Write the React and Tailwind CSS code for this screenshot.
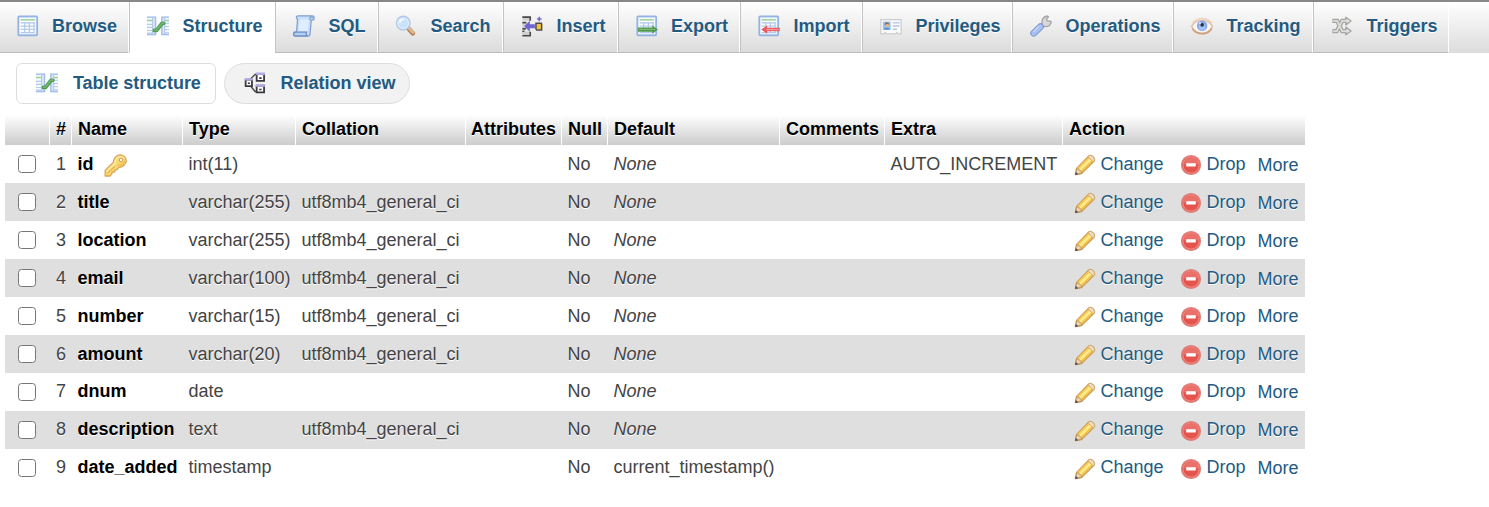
import React from "react";

function Icon({ children, className = "" }) {
  return (
    <svg viewBox="0 0 16 16" className={`h-[22px] w-[22px] shrink-0 ${className}`} fill="none" aria-hidden="true">
      {children}
    </svg>
  );
}

function Sheet() {
  return (
    <>
      <rect x="0.9" y="1" width="13.8" height="13.8" rx="0.6" fill="#d9e6f8" stroke="#94b3e0" strokeWidth="1.200" />
      <rect x="2" y="2.1" width="11.6" height="11.6" fill="#fbfdff" />
      <path d="M2.600 3.500h10.400" stroke="#a9d3a4" strokeWidth="1.300" />
      <path d="M2.600 5.700h10.400" stroke="#b4caea" strokeWidth="1" />
      <path d="M5.600 5.500v7.700M9 5.500v7.700M12.400 5.500v7.700M2.600 8.100h10.400M2.600 10.500h10.400M2.600 12.900h10.400" stroke="#b4caea" strokeWidth="0.9" />
    </>
  );
}

const BrowseIcon = () => <Icon><Sheet /></Icon>;

const StructureIcon = () => (
  <Icon>
    <path d="M0 1h6.700v13.700H0zM10.300 1H16v13.700h-5.700z" fill="#dce8f9" />
    <path d="M0 1.500h6.200v12.700H0M16 1.500h-5.200v12.700H16" stroke="#a3bfe7" strokeWidth="1" />
    <path d="M.2 2.300h3.500v11.200H.2zM13.200 2.300H16v11.200h-2.800z" fill="#f6faff" />
    <path d="M4.100 2v12M12.800 2v12" stroke="#b4caea" strokeWidth="0.8" />
    <path d="M0 6.800h4M0 9h4M0 11.300h4M0 13.200h4M13 6h3M13 8.400h3M13 10.700h3M13 13h3" stroke="#b4caea" strokeWidth="0.8" />
    <path d="M0 4h4M13 4h3" stroke="#a0cca4" strokeWidth="1.200" />
    <path d="M5.300 11.200h1.700l4-5.200h1.200" stroke="#4d9a4f" strokeWidth="2.700" strokeLinecap="round" strokeLinejoin="round" />
    <path d="M5.400 11h1.600l4-5.200h1.200" stroke="#6cb36d" strokeWidth="1.400" strokeLinecap="round" strokeLinejoin="round" />
  </Icon>
);

const SqlIcon = () => (
  <Icon>
    <path d="M3.500.7h10.700c1.500 0 1.600 3-.1 3h-.8l-.9 9.800c0 1-.6 1.800-1.500 1.800H1.500c-1.600 0-1.600-3 0-3h1.100L3.300 3C2 2.400 2.200.7 3.500.7z" fill="#c8dff9" stroke="#7f9fcf" strokeWidth="0.9" />
    <path d="M4.800 3.300h6.700l-.8 8.300H4z" fill="#deedff" />
    <path d="M12.300 3.700l.2-1.700c.3-.9 1.500-.8 2 .2" stroke="#7f9fcf" />
    <path d="M2 12.500h7.800c-.5 1 0 2.500.8 2.700H1.500c-1.300-.2-1.300-2.600.5-2.700z" fill="#b3d0f2" stroke="#6f90c2" strokeWidth="0.9" />
  </Icon>
);

const SearchIcon = () => (
  <Icon>
    <path d="M9.900 10l3.100 3.300" stroke="#b38660" strokeWidth="3.400" strokeLinecap="round" />
    <path d="M10.200 9.800l3 3" stroke="#e6bb8c" strokeWidth="1.800" strokeLinecap="round" />
    <circle cx="6" cy="5.900" r="4.900" fill="#c9e1fb" stroke="#b4c9e3" strokeWidth="1.100" />
    <circle cx="6" cy="5.900" r="3.900" stroke="#deefff" strokeWidth="0.900" />
    <path d="M3.500 5.700c.2-1.800 1.500-2.600 3-2.500" stroke="#f5fbff" strokeWidth="1.300" />
  </Icon>
);

const InsertIcon = () => (
  <Icon>
    <path d="M1 1h5.500v3H1M1 6h3v4H1M1 12h5.500v3H1" fill="#cfcfcf" />
    <path d="M1 1.500h5.700v2.700M1 5.500h3M1 10.100h2.500M1 11.800h1.500M1 15.100h5.700v-3" stroke="#4b4b4b" strokeWidth="1.200" />
    <path d="M2.300 8.200l4.100-4v2.500h3.700v3H6.400v2.500z" fill="#6d66cf" />
    <rect x="11.200" y="6.300" width="3.600" height="4.300" fill="#f4c833" />
    <path d="M10.900 10.800V6h4.200M15 6v4.900h-4" stroke="#514943" strokeWidth="1.100" />
    <path d="M13.300 1.200v3.400M11.600 2.900H15" stroke="#736cd1" strokeWidth="1.200" />
  </Icon>
);

const ExportIcon = () => (
  <Icon>
    <Sheet />
    <path d="M1.400 9h10.500V7.600l4 3-4 3v-1.500H1.400z" fill="#4d984b" />
    <path d="M2 10.500h12" stroke="#7fb978" strokeWidth="0.9" />
  </Icon>
);

const ImportIcon = () => (
  <Icon>
    <Sheet />
    <path d="M2.400 10.600l4.200-3v1.700h9.200v2.600H6.600v1.700z" fill="#e8575d" />
    <path d="M6 10.600h9" stroke="#f49da0" strokeWidth="0.9" />
  </Icon>
);

const PrivilegesIcon = () => (
  <Icon>
    <path d="M.6 3.300h14.800v10.400h-2.200l-.9-1-1 1H4.800l-1-1-.9 1H.6z" fill="#fafafa" stroke="#cdcdcd" strokeWidth="0.9" />
    <rect x="2.100" y="4.800" width="5.600" height="6" fill="#8fc0f0" />
    <path d="M2.800 10.800c0-2.300 4.200-2.300 4.200 0z" fill="#5a92d3" />
    <circle cx="5" cy="7.400" r="1.500" fill="#e6b68e" />
    <path d="M3.400 7.200c0-2.500 3.200-2.500 3.200-.1l-1-.8z" fill="#8b6544" />
    <path d="M9.300 5.700h4.900M9.300 8h4.900M9.300 10.400h3" stroke="#b2c7df" strokeWidth="1" />
  </Icon>
);

const OperationsIcon = () => (
  <Icon>
    <path d="M7.500 8.100l1.400-1.700C8 4 9.500 1.200 12.500.7l.9.600-1.500 1.800.8 1.400 2.200-.1.600.8c-.8 2.700-3 3.500-4.900 3L9 9.500z" fill="#d8d8d8" stroke="#a0a0a0" strokeWidth="0.9" strokeLinejoin="round" />
    <path d="M2.700 13.200l4.900-4.700" stroke="#8199d0" strokeWidth="5" strokeLinecap="round" />
    <path d="M2.700 13.200l4.900-4.700" stroke="#a8c1f2" strokeWidth="3.500" strokeLinecap="round" />
    <path d="M2.400 12.300l4.200-4.100" stroke="#c9dafa" strokeWidth="0.900" />
  </Icon>
);

const TrackingIcon = () => (
  <Icon>
    <path d="M.4 8.300C3.500 2.300 12.300 2.200 15.600 8.300 12.700 14.900 3.200 14.900.4 8.300z" fill="#faf6f3" stroke="#e3bfa6" strokeWidth="1.100" />
    <path d="M1 5.900C4.600 1.500 12 1.600 15.200 6" stroke="#efd6c5" strokeWidth="1.300" />
    <path d="M1 10c3.500 4.900 11 4.800 14.200-.2" stroke="#cf9e7e" strokeWidth="1.100" />
    <circle cx="8.100" cy="7.800" r="3.800" fill="#86aae9" />
    <circle cx="8.100" cy="8.700" r="2.300" fill="#a5c2f4" />
    <circle cx="8.100" cy="7.200" r="1.300" fill="#243144" />
    <circle cx="6.500" cy="6" r="0.700" fill="#e7f1ff" />
  </Icon>
);

const TriggersIcon = () => (
  <Icon>
    <path d="M1 4.300h3.500l3.600 7.400h3.500M1 11.700h3.200l3.900-7.400h3.500" stroke="#a5a5a3" strokeWidth="3.100" />
    <path d="M10.800 1.600l3.800 2.800-3.800 2.800zM10.800 8.800l3.800 2.800-3.800 2.800z" fill="#e4e4e2" stroke="#a5a5a3" strokeWidth="1" strokeLinejoin="round" />
    <path d="M1.600 4.300h2.900l3.600 7.400h3.700M1.600 11.700h2.600l3.900-7.400h3.700" stroke="#deded9" strokeWidth="1.300" />
  </Icon>
);

const RelationIcon = () => (
  <Icon>
    <path d="M4.800 5L8 1.800h1.500M4.800 10.200l3.200 4h1.500" stroke="#4a484e" strokeWidth="1" />
    <path d="M1.200 5.600h4.600v4.600H1.200zM9.200 1.500h5.400v5H9.200zM9.200 9.900h5.400v4.900H9.200z" fill="#fff" stroke="#3a383e" strokeWidth="1.300" />
    <path d="M.6 5.400h5.800M8.600 1.300h6.600M8.600 9.800h6.600" stroke="#aeaadf" strokeWidth="1.700" />
    <path d="M2.800 8.200h1.500M11.100 4.400h1.700M11.100 12.700h1.700" stroke="#343238" strokeWidth="1.200" />
  </Icon>
);

const KeyIcon = () => (
  <svg viewBox="0 0 16 16" className="relative top-[1px] h-[23px] w-[23px] shrink-0" fill="none" aria-hidden="true">
    <path d="M6.700 5.600C6.300 3.400 8.600.9 11 .7c2.200-.1 4.500 1.700 4.500 4 0 2.400-2.900 4.700-5 4.600L8.900 11H7.500v1.600H5.700L5.400 14l-1.300 1.300H.8V11.500z" fill="#f8d772" stroke="#dba557" strokeWidth="0.900" strokeLinejoin="round" />
    <path d="M1.700 12.200l6.100-6C7.400 4 9 2.100 11 1.800c1.300 0 2.600.6 3.100 1.500" stroke="#fdeba2" strokeWidth="1.100" />
    <path d="M9.500 7.800c2 .5 4.400-.7 4.900-2.800" stroke="#f0bf52" strokeWidth="1.100" />
    <circle cx="11.900" cy="4.200" r="1.200" fill="#fff" stroke="#d6a04e" strokeWidth="0.700" />
    <path d="M2.300 13.500l5.100-4.700" stroke="#e2b04c" strokeWidth="0.700" />
  </svg>
);

const PencilIcon = () => (
  <Icon className="relative top-[1px]">
    <path d="M1 15l.9-4.500L10.900 1.300c1.500-1.300 4.900 1.800 3.800 3.800L5.500 14.200z" fill="#f9d95f" stroke="#cf9f55" strokeWidth="0.900" strokeLinejoin="round" />
    <path d="M2.800 10.700L10.600 2.900" stroke="#f3c75a" strokeWidth="0.900" />
    <path d="M3.900 11.800L12.200 3.700" stroke="#fdec8e" strokeWidth="1.500" />
    <path d="M5.200 13.100L13.500 5" stroke="#ebb950" strokeWidth="0.900" />
    <path d="M10.200 2l.7-.7c1.500-1.300 4.900 1.800 3.800 3.800l-.7.700z" fill="#f1dcc0" stroke="#cda572" strokeWidth="0.700" />
    <path d="M1 15l.9-4.300c1.700.1 3.400 1.700 3.700 3.300z" fill="#ecd2a6" stroke="#b98e58" strokeWidth="0.700" />
    <path d="M.8 15.200l.5-2.200 1.800 1.700z" fill="#4f4943" />
  </Icon>
);

const DropIcon = () => (
  <Icon className="relative top-[1px]">
    <circle cx="8" cy="8" r="6.900" fill="#e5534d" stroke="#dd8480" strokeWidth="0.900" />
    <path d="M2.700 7.700a5.300 5.200 0 0 1 10.600 0z" fill="#ea7069" />
    <circle cx="8" cy="8" r="5.900" stroke="#f09089" strokeWidth="0.700" />
    <rect x="4.500" y="6.800" width="7" height="2.300" rx="0.300" fill="#fff" />
  </Icon>
);

const tabs = [
  { label: "Browse", icon: BrowseIcon, size: "w-[129px] pl-[16.500px]" },
  { label: "Structure", icon: StructureIcon, size: "w-[146px] pl-[17px]", active: true },
  { label: "SQL", icon: SqlIcon, size: "w-[103px] pl-[17px]" },
  { label: "Search", icon: SearchIcon, size: "w-[125px] pl-[16px]" },
  { label: "Insert", icon: InsertIcon, size: "w-[115px] pl-[17px]" },
  { label: "Export", icon: ExportIcon, size: "w-[122px] pl-[16.500px]" },
  { label: "Import", icon: ImportIcon, size: "w-[122px] pl-[17px]" },
  { label: "Privileges", icon: PrivilegesIcon, size: "w-[150px] pl-[17px]" },
  { label: "Operations", icon: OperationsIcon, size: "w-[161px] pl-[17px]" },
  { label: "Tracking", icon: TrackingIcon, size: "w-[140px] pl-[17px]" },
  { label: "Triggers", icon: TriggersIcon, size: "w-[136px] pl-[17px]" },
];

const columns = ["", "#", "Name", "Type", "Collation", "Attributes", "Null", "Default", "Comments", "Extra", "Action"];

const utf = "utf8mb4_general_ci";
const rows = [
  { name: "id", type: "int(11)", key: true, extra: "AUTO_INCREMENT" },
  { name: "title", type: "varchar(255)", collation: utf },
  { name: "location", type: "varchar(255)", collation: utf },
  { name: "email", type: "varchar(100)", collation: utf },
  { name: "number", type: "varchar(15)", collation: utf },
  { name: "amount", type: "varchar(20)", collation: utf },
  { name: "dnum", type: "date" },
  { name: "description", type: "text", collation: utf },
  { name: "date_added", type: "timestamp", value: "current_timestamp()" },
];

const grid = "grid grid-cols-[44px_22px_111px_113px_170px_96px_46px_172px_105px_178px_243px]";

function Tab({ label, icon: Glyph, size, active, first }) {
  const skin = active
    ? "bg-white border-b-white"
    : "bg-linear-to-b from-white to-[#dcdcdc] border-b-[#bbb] border-r-white";
  return (
    <a className={`flex h-[51px] shrink-0 items-center gap-[13.5px] border-r border-b border-r-white pb-[2px] ${first ? "" : "border-l border-l-[#c4c4c4]"} ${skin} ${size}`}>
      <Glyph />
      <span>{label}</span>
    </a>
  );
}

function Row({ row, index }) {
  // The last rows carry their text one pixel higher.
  const lift = index >= 6 ? "pb-[2px]" : "";
  return (
    <div className={`${grid} h-[38px] items-center ${index % 2 ? "bg-[#dfdfdf]" : "bg-white"}`}>
      <div className="pl-[13px]">
        <input type="checkbox" aria-label={row.name} className="block h-[18px] w-[18px] appearance-none rounded-[3.5px] border-[1.5px] border-[#767676] bg-white" />
      </div>
      <div className={`pl-[7px] ${lift}`}>{index + 1}</div>
      <div className={`flex items-center gap-[10px] pl-[6.5px] font-bold text-black ${lift}`}>
        {row.name}
        {row.key && <KeyIcon />}
      </div>
      <div className={`pl-[6.5px] ${lift}`}>{row.type}</div>
      <div className={`pl-[6.5px] ${lift}`}>{row.collation}</div>
      <div />
      <div className={`pl-[6.5px] ${lift}`}>No</div>
      <div className={`pl-[6.5px] ${lift}`}>{row.value || <i>None</i>}</div>
      <div />
      <div className={`pl-[6.5px] ${lift}`}>{row.extra}</div>
      <div className="flex items-center pl-[12px] text-[#235a81]">
        <PencilIcon />
        <span className={`w-[84px] pl-[4.5px] ${lift}`}>Change</span>
        <DropIcon />
        <span className={`w-[55.5px] pl-[4.5px] ${lift}`}>Drop</span>
        <span className={index >= 4 ? "" : "pt-[2px]"}>More</span>
      </div>
    </div>
  );
}

export default function App() {
  return (
    <div className="min-h-[507px] w-[1489px] overflow-hidden bg-white font-['Liberation_Sans',Arial,sans-serif] text-[18px] leading-[22px] text-[#444]">
      <nav className="flex h-[53px] border-t-2 border-[#888] bg-linear-to-b from-white to-[#dcdcdc] font-bold text-[#235a81] [text-shadow:0_1px_0_#fff]">
        {tabs.map((tab, i) => (
          <Tab key={tab.label} {...tab} first={i === 0} />
        ))}
      </nav>

      <div className="flex gap-2 pt-[10px] pl-4 font-bold text-[#235a81]">
        <a className="flex h-[41px] w-[200px] items-center gap-[15px] rounded-md border border-[#ddd] bg-white pb-[1px] pl-[19px]">
          <StructureIcon />
          <span className="tracking-[-0.06px]">Table structure</span>
        </a>
        <a className="flex h-[41px] w-[186px] items-center gap-[14.5px] rounded-full border border-[#ddd] bg-[#f2f2f2] pb-[1px] pl-[19px]">
          <RelationIcon />
          Relation view
        </a>
      </div>

      <main className="mt-[11px] ml-[5px] w-[1300px] [text-shadow:0_1px_0_#fff]">
        <div className={`${grid} h-[30px] font-bold text-black`}>
          {columns.map((name, i) => (
            <div key={i} className={`flex items-center bg-linear-to-b from-white to-[#ccc] pb-[2px] ${i === 0 ? "" : name === "Attributes" ? "border-l border-white pl-[5px]" : "border-l border-white pl-[6px]"}`}>
              {name}
            </div>
          ))}
        </div>
        {rows.map((row, i) => (
          <Row key={row.name} row={row} index={i} />
        ))}
      </main>
    </div>
  );
}
